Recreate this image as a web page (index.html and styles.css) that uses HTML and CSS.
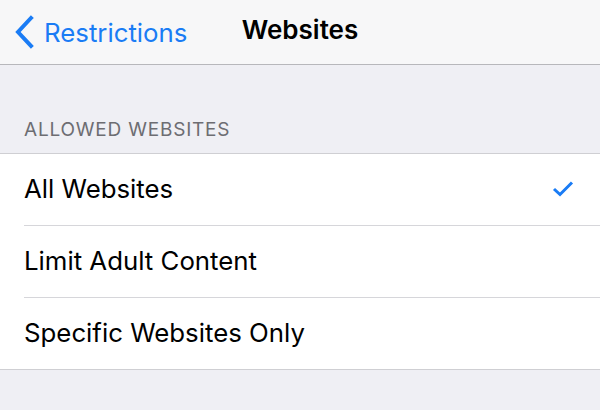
FILE: index.html
```html
<!DOCTYPE html>
<html lang="en">
<head>
  <meta charset="UTF-8" />
  <title>Websites</title>
  <link rel="stylesheet" href="styles.css">
</head>
<body>

<div class="navbar">
  <a class="back" href="#">
    <svg class="chevron" width="20" height="34" viewBox="0 0 20 34">
      <path d="M17 3 L4 17 L17 31" fill="none" stroke="#1a7cf5" stroke-width="4" stroke-linecap="square" stroke-linejoin="miter"/>
    </svg>
    <span>Restrictions</span>
  </a>
  <div class="title">Websites</div>
</div>

<div class="section-header">ALLOWED WEBSITES</div>

<ul class="list">
  <li class="row">
    <span>All Websites</span>
    <svg class="check" width="22" height="17" viewBox="0 0 22 17">
      <path d="M2 9 L8 14.5 L20 2.5" fill="none" stroke="#1a7cf5" stroke-width="3"/>
    </svg>
  </li>
  <li class="row"><span>Limit Adult Content</span></li>
  <li class="row"><span>Specific Websites Only</span></li>
</ul>

</body>
</html>
```

FILE: styles.css
```css
html, body {
  margin: 0;
  padding: 0;
  background: #efeff4;
  font-family: 'Inter', sans-serif;
  color: #000;
}

.navbar {
  position: relative;
  height: 64px;
  background: #f7f7f8;
  border-bottom: 1px solid #b7b7bb;
  display: flex;
  align-items: center;
}

.back {
  display: flex;
  align-items: center;
  gap: 10px;
  padding-left: 14px;
  color: #1a7cf5;
  text-decoration: none;
  font-size: 25.8px;
}

.chevron {
  display: block;
}

.title {
  position: absolute;
  left: 0;
  right: 0;
  top: 0;
  line-height: 60px;
  text-align: center;
  font-size: 26px;
  font-weight: 600;
  pointer-events: none;
}

.section-header {
  height: 88px;
  box-sizing: border-box;
  padding: 53px 0 0 24px;
  font-size: 19px;
  color: #6d6d72;
  letter-spacing: 0.8px;
}

.list {
  list-style: none;
  margin: 0;
  padding: 0 0 0 24px;
  background: #fff;
  border-top: 1px solid #cfcfd3;
  border-bottom: 1px solid #cfcfd3;
}

.row {
  height: 69px;
  display: flex;
  align-items: center;
  justify-content: space-between;
  padding-right: 26px;
  padding-bottom: 2px;
  font-size: 25.8px;
  border-bottom: 1px solid #d6d6da;
}

.row:last-child {
  border-bottom: none;
}

.check {
  display: block;
}
```
